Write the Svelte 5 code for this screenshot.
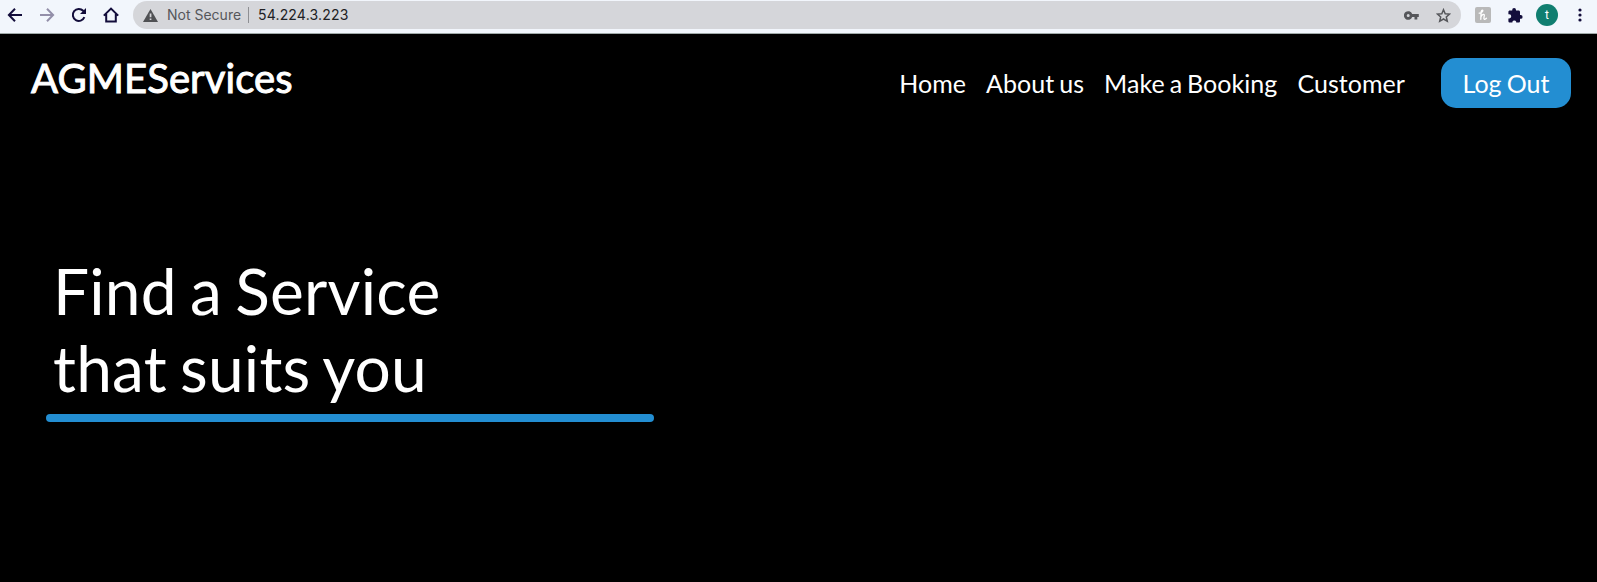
<script>
  const links = ['Home', 'About us', 'Make a Booking', 'Customer'];
</script>

<div class="window">
  <header class="toolbar">
    <div class="controls">
      <svg width="16" height="16" viewBox="0 0 16 16"><path d="M15 8H2.5M8 1.8L1.9 8L8 14.2" /></svg>
      <svg class="dim" width="16" height="16" viewBox="0 0 16 16"><path d="M1 8H13.5M8 1.8L14.1 8L8 14.2" /></svg>
      <svg width="16" height="16" viewBox="0 0 16 16"><path d="M13.4 10.2A6 6 0 1 1 12.2 3.8L13.8 5.4" /><path class="solid" d="M15 1V7H9Z" /></svg>
      <svg width="16" height="16" viewBox="0 0 16 16"><path d="M.8 8.6L8 1.6L15.2 8.6M3.2 7V14.5H12.8V7" /></svg>
    </div>
    <div class="address">
      <svg class="warn" width="15" height="13" viewBox="0 0 15 13"><path fill="#505154" d="M7.5 0L15 13H0Z" /><path fill="#d5d6da" d="M6.7 4.5h1.7v3.7H6.7zM6.7 9.4h1.7v1.7H6.7z" /></svg>
      <span class="status">Not Secure</span>
      <span class="divider"></span>
      <span class="host">54.224.3.223</span>
      <svg class="key" width="15" height="9" viewBox="0 0 15 9"><path fill="#55565a" fill-rule="evenodd" d="M8.2 3A4.3 4.3 0 1 0 8.2 6H10.5V8.5H13.3V6H14.8V3ZM4.2 3A1.5 1.5 0 1 1 4.2 6A1.5 1.5 0 1 1 4.2 3Z" /></svg>
      <svg width="15" height="15" viewBox="0 0 15 15"><path fill="none" stroke="#55565a" stroke-width="1.5" d="M7.5 1.7L9.2 5.7L13.6 6.1L10.3 9L11.3 13.3L7.5 11L3.7 13.3L4.7 9L1.4 6.1L5.8 5.7Z" /></svg>
    </div>
    <div class="extensions">
      <svg width="16" height="16" viewBox="0 0 16 16"><rect width="16" height="16" rx="2" fill="#b9b9b9" /><path fill="none" stroke="#fff" stroke-width="1.3" stroke-linecap="round" stroke-linejoin="round" d="M4.2 6.2C6.6 5.8 8.2 4.4 7.8 3.3C7.3 2.5 6.2 3.6 6.1 5.4L5.8 12.3M6 9.8C7 7.2 9.6 6.4 9.3 8.6L8.9 11C8.8 12.8 10.6 12.6 11.5 11.2" /></svg>
      <svg class="puzzle" width="15" height="15" viewBox="0 0 15 15"><path fill="#130d3b" d="M12.7 7H12V4C12 3.2 11.4 2.6 10.6 2.6H8V2A1.9 1.9 0 0 0 4.2 2V2.6H1.9C1 2.6.4 3.2.4 4V6.3H1.2A2 2 0 0 1 1.2 10.4H.4V13.2C.4 14 1 14.6 1.9 14.6H4.4V13.8A2 2 0 0 1 8.2 13.8V14.6H10.6C11.4 14.6 12 14 12 13.2V10.8H12.7A1.9 1.9 0 0 0 12.7 7Z" /></svg>
      <span class="avatar">t</span>
      <svg class="menu" width="4" height="14" viewBox="0 0 4 14"><g fill="#130d3b"><circle cx="2" cy="2" r="1.6" /><circle cx="2" cy="7" r="1.6" /><circle cx="2" cy="12" r="1.6" /></g></svg>
    </div>
  </header>

  <nav>
    <div class="brand">AGMEServices</div>
    <div class="links">
      {#each links as link}
        <span class="link">{link}</span>
      {/each}
      <button>Log Out</button>
    </div>
  </nav>

  <main>
    <h1>Find a Service<br />that suits you</h1>
    <div class="rule"></div>
  </main>
</div>

<style>
  :global(body) { background: #000; }
  .window { width: 1597px; height: 582px; overflow: hidden; background: #000; color: #fff; font-family: Lato, sans-serif; }
  .toolbar { box-sizing: border-box; height: 34px; border-bottom: 1px solid #a0aaa9; background: #f2f6fc; display: flex; align-items: flex-start; }
  svg { display: block; flex: none; }
  .controls { display: flex; gap: 16px; padding: 7px 0 0 7px; width: 126px; }
  .controls path { fill: none; stroke: #130d3b; stroke-width: 2; }
  .controls .solid { fill: #130d3b; stroke: none; }
  .controls .dim path { stroke: #938fa9; }
  .address { box-sizing: border-box; width: 1328px; height: 28px; margin-top: 1px; border-radius: 14px; background: #d5d6da; display: flex; align-items: center; padding: 0 10px; font: 14px/18px Inter, sans-serif; }
  .status, .host { padding-bottom: 1px; }
  .status { color: #55565a; margin-left: 9px; width: 81px; white-space: nowrap; }
  .divider { width: 1px; height: 16px; background: #8e8f93; }
  .host { color: #202124; margin-left: 9px; letter-spacing: .18px; }
  .key { margin-left: auto; margin-right: 17px; }
  .extensions { display: flex; align-items: center; height: 30px; margin-left: 14px; }
  .puzzle { margin-left: 17px; }
  .avatar { width: 22px; height: 22px; margin-left: 13px; border-radius: 50%; background: #107e70; font: 12px/22px Roboto, sans-serif; text-align: center; }
  .menu { margin-left: 20px; }
  nav { display: flex; justify-content: space-between; align-items: flex-start; height: 218px; padding: 0 26px 0 31px; }
  .brand { margin-top: 20px; font-size: 40px; line-height: 48px; letter-spacing: .1px; -webkit-text-stroke: 1px #fff; }
  .links { display: flex; align-items: center; margin-top: 24px; font-size: 25px; letter-spacing: .05px; word-spacing: -1.5px; }
  .link { margin-right: 20px; }
  button { box-sizing: border-box; width: 130px; height: 50px; margin-left: 16px; padding: 0; border: 0; border-radius: 15px; background: #238ed2; color: #fff; font: 25px Lato, sans-serif; word-spacing: -1.2px; }
  main { padding-left: 46px; }
  h1 { margin: 0 0 8px; padding-left: 7px; font-size: 64px; line-height: 77px; font-weight: 400; letter-spacing: .2px; word-spacing: -3.3px; }
  .rule { width: 608px; height: 8px; border-radius: 4px; background: #238ed2; }
</style>
